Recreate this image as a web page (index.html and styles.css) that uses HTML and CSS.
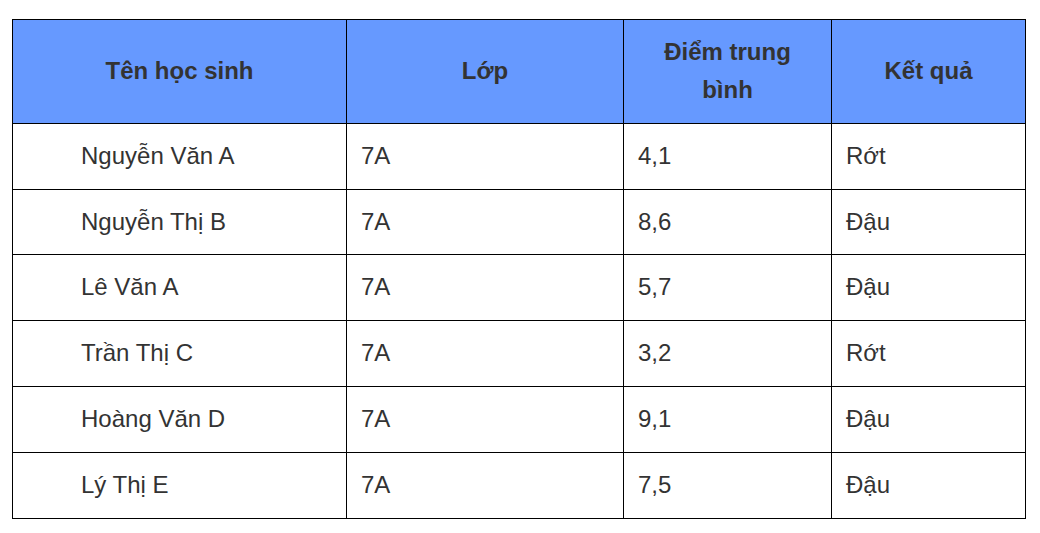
FILE: index.html
```html
<!DOCTYPE html>
<html lang="vi">
<head>
<meta charset="utf-8">
<link rel="stylesheet" href="styles.css">
</head>
<body>
<table class="grades">
  <colgroup>
    <col class="c1"><col class="c2"><col class="c3"><col class="c4">
  </colgroup>
  <thead>
    <tr><th>Tên học sinh</th><th>Lớp</th><th>Điểm trung bình</th><th>Kết quả</th></tr>
  </thead>
  <tbody>
    <tr><td class="name">Nguyễn Văn A</td><td>7A</td><td>4,1</td><td>Rớt</td></tr>
    <tr><td class="name">Nguyễn Thị B</td><td>7A</td><td>8,6</td><td>Đậu</td></tr>
    <tr><td class="name">Lê Văn A</td><td>7A</td><td>5,7</td><td>Đậu</td></tr>
    <tr><td class="name">Trần Thị C</td><td>7A</td><td>3,2</td><td>Rớt</td></tr>
    <tr><td class="name">Hoàng Văn D</td><td>7A</td><td>9,1</td><td>Đậu</td></tr>
    <tr><td class="name">Lý Thị E</td><td>7A</td><td>7,5</td><td>Đậu</td></tr>
  </tbody>
</table>
</body>
</html>
```
FILE: styles.css
```css
html, body {
  margin: 0;
  background: #ffffff;
}
body {
  padding: 19px 0 0 12px;
  font-family: "Liberation Sans", Arial, sans-serif;
  font-size: 24px;
  color: #333333;
}
.grades {
  border-collapse: collapse;
  width: 1013px;
  table-layout: fixed;
}
.c1 { width: 334px; }
.c2 { width: 277px; }
.c3 { width: 208px; }
.c4 { width: 194px; }
.grades th,
.grades td {
  border: 1px solid #000000;
  line-height: 38px;
  padding: 13px 14px 13.8px 14px;
  vertical-align: middle;
}
.grades th {
  background: #6699ff;
  font-weight: bold;
  text-align: center;
}
.grades td {
  text-align: left;
  font-weight: normal;
}
.grades td.name {
  padding-left: 68px;
}
```
